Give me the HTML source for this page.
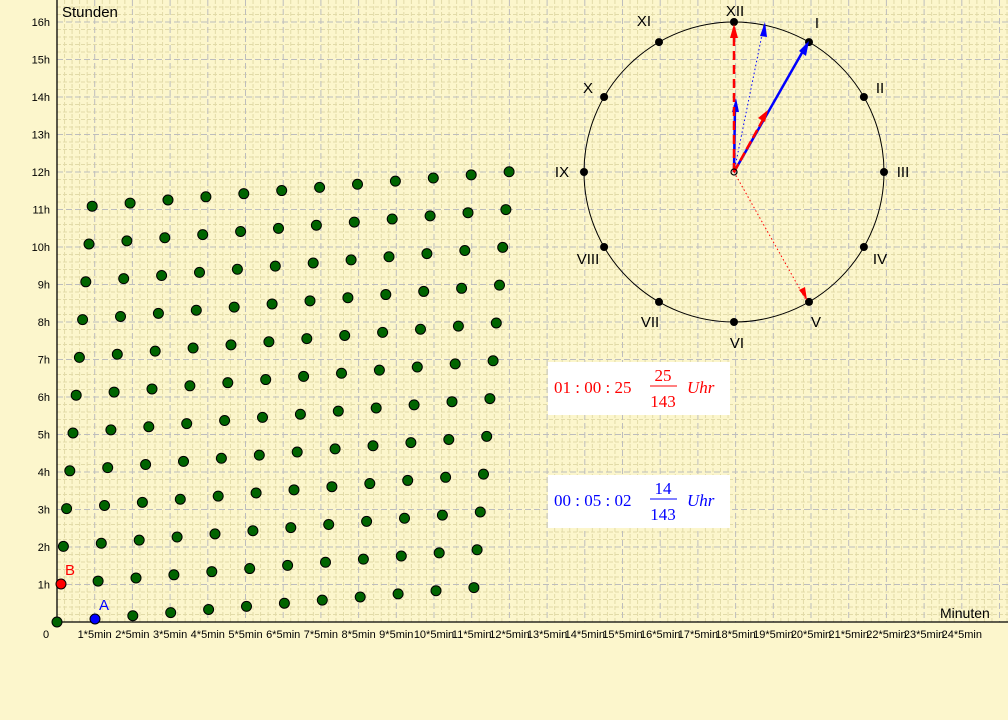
<!DOCTYPE html>
<html><head><meta charset="utf-8"><style>
html,body{margin:0;padding:0;background:#fcf6cc;}
svg{display:block}
</style></head><body>
<svg id="s" width="1008" height="720" xmlns="http://www.w3.org/2000/svg" font-family="Liberation Sans, sans-serif">
<rect width="1008" height="720" fill="#fcf6cc"/>
<g id="grid"></g>
<line x1="57" y1="622" x2="1008" y2="622" stroke="#000" stroke-width="1.3"/>
<line x1="57" y1="622" x2="57" y2="0" stroke="#000" stroke-width="1.3"/>
<text x="62" y="17" font-size="15">Stunden</text>
<text x="940" y="618" font-size="14">Minuten</text>
<text x="43" y="638" font-size="11">0</text>
<g id="labels" font-size="11"></g>
<circle cx="734" cy="172" r="150" fill="none" stroke="#000" stroke-width="1"/>
<g font-size="15" text-anchor="middle">
<text x="735" y="16">XII</text><text x="817" y="28">I</text><text x="880" y="93">II</text>
<text x="903" y="177">III</text><text x="880" y="264">IV</text><text x="816" y="327">V</text>
<text x="737" y="348">VI</text><text x="650" y="327">VII</text><text x="588" y="264">VIII</text>
<text x="562" y="177">IX</text><text x="588" y="93">X</text><text x="644" y="26">XI</text>
</g>
<g id="cd"></g>
<line x1="734" y1="172" x2="806" y2="300" stroke="#f00" stroke-width="1" stroke-dasharray="1.5,2.5"/>
<polygon points="807,300 799,290 805,287" fill="#f00"/>
<line x1="734" y1="172" x2="764" y2="25" stroke="#00f" stroke-width="1" stroke-dasharray="1.5,2.5"/>
<polygon points="765,22 760,36 767,37" fill="#00f"/>
<line x1="734" y1="172" x2="807" y2="44" stroke="#00f" stroke-width="2.5"/>
<polygon points="809,41 799,51 806,56" fill="#00f"/>
<line x1="734" y1="172" x2="735" y2="105" stroke="#00f" stroke-width="2.5"/>
<polygon points="736,98 732,112 739,112" fill="#00f"/>
<line x1="734" y1="172" x2="734" y2="28" stroke="#f00" stroke-width="2.5" stroke-dasharray="9,5"/>
<polygon points="734,24 730,38 738,38" fill="#f00"/>
<line x1="734" y1="172" x2="765" y2="116" stroke="#f00" stroke-width="2.5" stroke-dasharray="9,4"/>
<polygon points="768,110 758,118 765,122" fill="#f00"/>
<circle cx="734" cy="172" r="3" fill="none" stroke="#000" stroke-width="1.2"/>
<g id="dots"></g>
<circle cx="61" cy="584" r="5" fill="#f00" stroke="#000" stroke-width="1"/>
<text x="65" y="575" font-size="15" fill="#f00">B</text>
<circle cx="95" cy="619" r="5" fill="#00f" stroke="#000" stroke-width="1"/>
<text x="99" y="610" font-size="15" fill="#00f">A</text>
<rect x="548" y="362" width="182" height="53" fill="#fff"/>
<g font-family="Liberation Serif, serif" font-size="17" fill="#f00">
<text x="554" y="393">01 : 00 : 25</text>
<text x="663" y="381" text-anchor="middle">25</text>
<line x1="650" y1="386" x2="677" y2="386" stroke="#f00" stroke-width="1"/>
<text x="663" y="407" text-anchor="middle">143</text>
<text x="687" y="393" font-style="italic">Uhr</text>
</g>
<rect x="548" y="475" width="182" height="53" fill="#fff"/>
<g font-family="Liberation Serif, serif" font-size="17" fill="#00f">
<text x="554" y="506">00 : 05 : 02</text>
<text x="663" y="494" text-anchor="middle">14</text>
<line x1="650" y1="499" x2="677" y2="499" stroke="#00f" stroke-width="1"/>
<text x="663" y="520" text-anchor="middle">143</text>
<text x="687" y="506" font-style="italic">Uhr</text>
</g>
</svg>
<script>
var NS="http://www.w3.org/2000/svg";
function el(p,t,a,txt){var e=document.createElementNS(NS,t);for(var k in a)e.setAttribute(k,a[k]);if(txt)e.textContent=txt;document.getElementById(p).appendChild(e);return e;}
var X0=57,Y0=622,SX=37.7,SY=37.5;
for(var i=1;i<=26*5;i++){var x=X0+i*SX/5;if(x>1008)break;if(i%5)el("grid","line",{x1:x,y1:0,x2:x,y2:Y0,stroke:"#e2dba8","stroke-width":1,"stroke-dasharray":"4,2"});}
for(var j=1;j<=17*5;j++){var y=Y0-j*SY/5;if(y<0)break;if(j%5)el("grid","line",{x1:X0,y1:y,x2:1008,y2:y,stroke:"#e2dba8","stroke-width":1,"stroke-dasharray":"4,2"});}
for(var i=1;i<=26;i++){var x=X0+i*SX;if(x>1008)break;el("grid","line",{x1:x,y1:0,x2:x,y2:Y0,stroke:"#bdbdbd","stroke-width":1,"stroke-dasharray":"6,3"});}
for(var j=1;j<=17;j++){var y=Y0-j*SY;if(y<0)break;el("grid","line",{x1:X0,y1:y,x2:1008,y2:y,stroke:"#bdbdbd","stroke-width":1,"stroke-dasharray":"6,3"});
 if(j<=16)el("labels","text",{x:50,y:y+4,"text-anchor":"end"},j+"h");}
for(var i=1;i<=24;i++){el("labels","text",{x:X0+i*SX,y:638,"text-anchor":"middle"},i+"*5min");}
for(var k=0;k<12;k++){var a=k*Math.PI/6;el("cd","circle",{cx:734+150*Math.sin(a),cy:172-150*Math.cos(a),r:4,fill:"#000"});}
for(var h=0;h<12;h++)for(var m=0;m<12;m++){
 if((h==0&&m==1)||(h==1&&m==0))continue;
 var x=X0+m*37.9+h*3.2, y=Y0-h*37.8-m*3.13;
 el("dots","circle",{cx:x,cy:y,r:5,fill:"#006400",stroke:"#000","stroke-width":1});}
</script>
</body></html>
